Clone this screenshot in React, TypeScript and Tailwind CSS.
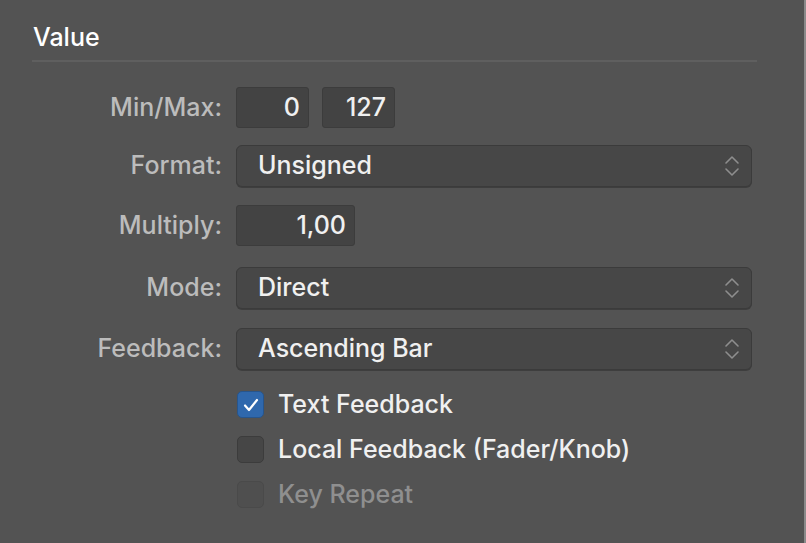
import React from "react"

const font = { fontFamily: "Inter, 'Liberation Sans', sans-serif" }

const Chevrons = () => (
  <svg width="16" height="26" viewBox="0 0 16 26" fill="none" stroke="#8e8e8e" strokeWidth="1.6" strokeLinecap="round" strokeLinejoin="round">
    <path d="M2 10 L8 4 L14 10" />
    <path d="M2 16 L8 22 L14 16" />
  </svg>
)

const Label = ({ children }: { children: React.ReactNode }) => (
  <div className="w-[204px] shrink-0 text-right text-[25px] text-[#bcbcbc] pr-[14px]">{children}</div>
)

const NumberBox = ({ value, width }: { value: string; width: string }) => (
  <div className={`${width} h-[41px] bg-[#434343] rounded-[3px] border border-[#3c3c3c] flex items-center justify-end pr-[8px] text-[25px] text-[#f0f0f0]`}>
    {value}
  </div>
)

const Select = ({ value }: { value: string }) => (
  <div className="flex-1 h-[42px] bg-[#474747] rounded-[6px] border border-[#3b3b3b] shadow-[0_1px_0_rgba(0,0,0,0.25)] flex items-center justify-between pl-[21px] pr-[11px] text-[25px] text-[#f0f0f0]">
    <span>{value}</span>
    <Chevrons />
  </div>
)

const Check = ({ label, checked, disabled }: { label: string; checked?: boolean; disabled?: boolean }) => (
  <div className="flex items-center h-[27px] gap-[14px]">
    {checked ? (
      <div className="w-[27px] h-[27px] rounded-[5px] bg-[#2f68ad] border border-[#27558c] flex items-center justify-center">
        <svg width="16" height="14" viewBox="0 0 16 14" fill="none" stroke="#fff" strokeWidth="2.2" strokeLinecap="round" strokeLinejoin="round">
          <path d="M2 7.5 L6 12 L14 2" />
        </svg>
      </div>
    ) : (
      <div className={`w-[27px] h-[27px] rounded-[5px] border ${disabled ? "bg-[#4f4f4f] border-[#4a4a4a]" : "bg-[#464646] border-[#3c3c3c]"}`} />
    )}
    <span className={`text-[25px] ${disabled ? "text-[#8f8f8f]" : "text-[#f0f0f0]"}`}>{label}</span>
  </div>
)

export default function App() {
  return (
    <div className="w-[806px] h-[543px] bg-[#535353] border-r-2 border-[#8a8a8a] overflow-hidden font-medium" style={font}>
      <div className="pl-[32px] pr-[47px] pt-[21px]">
        <div className="text-[25px] text-white leading-[32px] pl-[1px]">Value</div>
        <div className="mt-[7px] h-[2px] bg-[#5f5f5f]" />
      </div>

      <div className="pl-[32px] pr-[52px] mt-[25px] flex flex-col">
        <div className="flex items-center h-[41px]">
          <Label>Min/Max:</Label>
          <div className="flex gap-[13px]">
            <NumberBox value="0" width="w-[73px]" />
            <NumberBox value="127" width="w-[73px]" />
          </div>
        </div>

        <div className="flex items-center h-[42px] mt-[17px]">
          <Label>Format:</Label>
          <Select value="Unsigned" />
        </div>

        <div className="flex items-center h-[41px] mt-[18px]">
          <Label>Multiply:</Label>
          <NumberBox value="1,00" width="w-[119px]" />
        </div>

        <div className="flex items-center h-[42px] mt-[21px]">
          <Label>Mode:</Label>
          <Select value="Direct" />
        </div>

        <div className="flex items-center h-[42px] mt-[19px]">
          <Label>Feedback:</Label>
          <Select value="Ascending Bar" />
        </div>

        <div className="pl-[205px] mt-[21px] flex flex-col gap-[18px]">
          <Check label="Text Feedback" checked />
          <Check label="Local Feedback (Fader/Knob)" />
          <Check label="Key Repeat" disabled />
        </div>
      </div>
    </div>
  )
}
